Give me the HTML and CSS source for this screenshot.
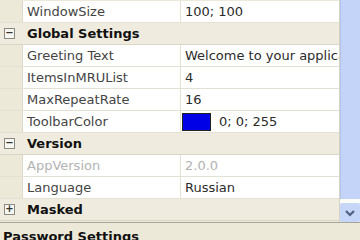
FILE: index.html
```html
<!DOCTYPE html>
<html>
<head>
<meta charset="utf-8">
<link rel="stylesheet" href="styles.css">
</head>
<body>
<div class="window">
  <div class="grid">
    <div class="rows">
      <div class="row prop">
        <div class="gutter"></div>
        <div class="name">WindowSize</div>
        <div class="value">100; 100</div>
      </div>
      <div class="row cat">
        <div class="gutter"><span class="box">−</span></div>
        <div class="cat-title">Global Settings</div>
      </div>
      <div class="row prop">
        <div class="gutter"></div>
        <div class="name">Greeting Text</div>
        <div class="value">Welcome to your application!</div>
      </div>
      <div class="row prop">
        <div class="gutter"></div>
        <div class="name">ItemsInMRUList</div>
        <div class="value">4</div>
      </div>
      <div class="row prop">
        <div class="gutter"></div>
        <div class="name">MaxRepeatRate</div>
        <div class="value">16</div>
      </div>
      <div class="row prop">
        <div class="gutter"></div>
        <div class="name">ToolbarColor</div>
        <div class="value"><span class="swatch"></span>0; 0; 255</div>
      </div>
      <div class="row cat">
        <div class="gutter"><span class="box">−</span></div>
        <div class="cat-title">Version</div>
      </div>
      <div class="row prop">
        <div class="gutter"></div>
        <div class="name muted">AppVersion</div>
        <div class="value muted">2.0.0</div>
      </div>
      <div class="row prop">
        <div class="gutter"></div>
        <div class="name">Language</div>
        <div class="value">Russian</div>
      </div>
      <div class="row cat">
        <div class="gutter"><span class="box">+</span></div>
        <div class="cat-title">Masked</div>
      </div>
    </div>
    <div class="scroll">
      <div class="thumb"></div>
      <div class="track"></div>
      <div class="btn">
        <svg width="12" height="10" viewBox="0 0 12 10"><path d="M2 3 L6 7 L10 3" fill="none" stroke="#4d6185" stroke-width="2.2"/></svg>
      </div>
    </div>
  </div>
  <div class="desc">
    <div class="desc-title">Password Settings</div>
  </div>
</div>
</body>
</html>
```
FILE: styles.css
```css
html, body {
  margin: 0;
  padding: 0;
}
body {
  width: 360px;
  height: 240px;
  overflow: hidden;
  background: #ece9d8;
  font-family: "DejaVu Sans", Tahoma, sans-serif;
  font-size: 13px;
  color: #333;
}
.window {
  display: flex;
  flex-direction: column;
}
.grid {
  display: flex;
  height: 222px;
  border-bottom: 1px solid #a7a69a;
  background: #ece9d8;
}
.rows {
  width: 339px;
  padding-top: 1px;
  border-right: 1px solid #d6d3c4;
  display: flex;
  flex-direction: column;
  overflow: hidden;
}
.row {
  display: flex;
  height: 21px;
  border-bottom: 1px solid #e3e1d3;
  flex: none;
  align-items: stretch;
}
.gutter {
  width: 22px;
  flex: none;
  background: #ece9d8;
  display: flex;
  align-items: center;
  justify-content: center;
}
.prop .gutter {
  border-right: 1px solid #dcd9c9;
}
.name {
  width: 153px;
  flex: none;
  background: #fff;
  padding-left: 4px;
  border-right: 1px solid #e3e1d3;
  display: flex;
  align-items: center;
  white-space: nowrap;
  overflow: hidden;
  color: #444;
}
.value {
  flex: 1;
  min-width: 0;
  background: #fff;
  padding-left: 4px;
  display: flex;
  align-items: center;
  white-space: nowrap;
  overflow: hidden;
  color: #2b2b2b;
}
.muted {
  color: #b3b3b3;
}
.cat {
  background: #efecdf;
  border-bottom: 1px solid #d9d6c6;
}
.cat .gutter {
  background: #efecdf;
}
.cat-title {
  font-weight: bold;
  color: #111;
  padding-left: 5px;
  display: flex;
  align-items: center;
}
.box {
  width: 9px;
  height: 9px;
  border: 1px solid #8a8a80;
  background: #f7f6f0;
  font-size: 10px;
  line-height: 8px;
  text-align: center;
  color: #333;
  font-weight: bold;
  margin-left: -3px;
}
.swatch {
  flex: none;
  width: 27px;
  height: 16px;
  background: #0000e6;
  border: 1px solid #222;
  margin-left: -3px;
  margin-right: 8px;
}
.scroll {
  width: 20px;
  display: flex;
  flex-direction: column;
  background: #f4f3ee;
}
.thumb {
  height: 199px;
  background: #c4d4f8;
  border-left: 1px solid #b2c4ec;
}
.track {
  height: 4px;
  background: #fbfbf8;
}
.btn {
  flex: 1;
  background: #c6d6f9;
  border-radius: 2px;
  display: flex;
  align-items: center;
  justify-content: center;
}
.desc {
  height: 17px;
  padding: 6px 0 0 3px;
}
.desc-title {
  font-weight: bold;
  color: #111;
}
```
